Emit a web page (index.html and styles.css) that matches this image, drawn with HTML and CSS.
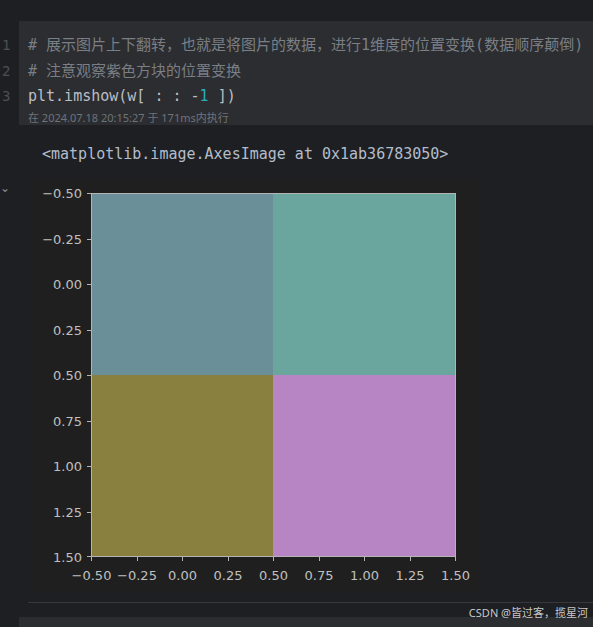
FILE: index.html
```html
<!DOCTYPE html>
<html lang="zh">
<head>
<meta charset="utf-8">
<link rel="stylesheet" href="styles.css">
</head>
<body>
<div class="page">
  <div class="code-row">
    <div class="gutter">
      <div class="ln">1</div>
      <div class="ln">2</div>
      <div class="ln">3</div>
    </div>
    <div class="cell">
      <div class="line cm"># 展示图片上下翻转，也就是将图片的数据，进行1维度的位置变换(数据顺序颠倒)</div>
      <div class="line cm"># 注意观察紫色方块的位置变换</div>
      <div class="line">plt.imshow(w[ : : -<span class="num">1</span> ])</div>
      <div class="meta">在 2024.07.18 20:15:27 于 171ms内执行</div>
    </div>
  </div>
  <div class="output">
    <div class="out-gutter"><span class="chev">⌄</span></div>
    <div class="out-body">
      <div class="repr">&lt;matplotlib.image.AxesImage at 0x1ab36783050&gt;</div>
      <div class="figure">
        <svg width="450" height="414" viewBox="0 0 450 414" shape-rendering="crispEdges">
          <rect x="0" y="0" width="450" height="414" fill="#1f1f1f"/>
          <rect x="61" y="15" width="182" height="182" fill="#6b8f99"/>
          <rect x="243" y="15" width="183" height="182" fill="#6aa59e"/>
          <rect x="61" y="197" width="182" height="182" fill="#898040"/>
          <rect x="243" y="197" width="183" height="182" fill="#b784c4"/>
          <rect x="61.5" y="15.5" width="364" height="363" fill="none" stroke="#b4b4b4" stroke-width="1"/>
          <g stroke="#b4b4b4" stroke-width="1">
            <line x1="57" y1="15.5" x2="61" y2="15.5"/>
            <line x1="57" y1="61.5" x2="61" y2="61.5"/>
            <line x1="57" y1="106.5" x2="61" y2="106.5"/>
            <line x1="57" y1="152.5" x2="61" y2="152.5"/>
            <line x1="57" y1="197.5" x2="61" y2="197.5"/>
            <line x1="57" y1="243.5" x2="61" y2="243.5"/>
            <line x1="57" y1="288.5" x2="61" y2="288.5"/>
            <line x1="57" y1="334.5" x2="61" y2="334.5"/>
            <line x1="57" y1="378.5" x2="61" y2="378.5"/>
            <line x1="61.5" y1="379" x2="61.5" y2="383"/>
            <line x1="107.5" y1="379" x2="107.5" y2="383"/>
            <line x1="152.5" y1="379" x2="152.5" y2="383"/>
            <line x1="198.5" y1="379" x2="198.5" y2="383"/>
            <line x1="243.5" y1="379" x2="243.5" y2="383"/>
            <line x1="289.5" y1="379" x2="289.5" y2="383"/>
            <line x1="334.5" y1="379" x2="334.5" y2="383"/>
            <line x1="380.5" y1="379" x2="380.5" y2="383"/>
            <line x1="425.5" y1="379" x2="425.5" y2="383"/>
          </g>
          <g class="tick" text-anchor="end" shape-rendering="auto">
            <text x="52" y="20">−0.50</text>
            <text x="52" y="65.5">−0.25</text>
            <text x="52" y="111">0.00</text>
            <text x="52" y="156.5">0.25</text>
            <text x="52" y="202">0.50</text>
            <text x="52" y="247.5">0.75</text>
            <text x="52" y="293">1.00</text>
            <text x="52" y="338.5">1.25</text>
            <text x="52" y="384">1.50</text>
          </g>
          <g class="tick" text-anchor="middle" shape-rendering="auto">
            <text x="61.5" y="402">−0.50</text>
            <text x="107" y="402">−0.25</text>
            <text x="152.5" y="402">0.00</text>
            <text x="198" y="402">0.25</text>
            <text x="243.5" y="402">0.50</text>
            <text x="289" y="402">0.75</text>
            <text x="334.5" y="402">1.00</text>
            <text x="380" y="402">1.25</text>
            <text x="425.5" y="402">1.50</text>
          </g>
        </svg>
      </div>
    </div>
  </div>
  <div class="sep"></div>
  <div class="next-cell"></div>
  <div class="watermark">CSDN @皆过客，揽星河</div>
</div>
</body>
</html>
```
FILE: styles.css
```css
html, body {
  margin: 0;
  padding: 0;
  background: #1e1f22;
}
body {
  width: 593px;
  height: 627px;
  overflow: hidden;
}
.page {
  position: relative;
  width: 593px;
  height: 627px;
  padding-top: 21px;
  box-sizing: border-box;
}
.code-row {
  display: grid;
  grid-template-columns: 19px 1fr;
}
.gutter {
  padding-top: 12px;
  font-family: "DejaVu Sans Mono", monospace;
  font-size: 14px;
  color: #4b4f56;
}
.ln {
  height: 25.5px;
  line-height: 25.5px;
  padding-left: 2px;
}
.cell {
  background: #2b2d30;
  padding: 12px 0 0 9px;
  height: 104px;
  box-sizing: border-box;
  font-family: "DejaVu Sans Mono", "Noto Sans CJK SC", monospace;
  font-size: 15px;
  color: #bcbec4;
}
.line {
  height: 25.5px;
  line-height: 25.5px;
  white-space: nowrap;
}
.cm {
  color: #7a7e85;
}
.num {
  color: #2aacb8;
}
.meta {
  font-family: "Noto Sans", "Noto Sans CJK SC", sans-serif;
  font-size: 11px;
  line-height: 14px;
  height: 14px;
  color: #6f737a;
  white-space: nowrap;
  margin-top: 1px;
}
.output {
  display: grid;
  grid-template-columns: 30px 1fr;
}
.out-gutter {
  position: relative;
}
.chev {
  position: absolute;
  left: 0;
  top: 57px;
  font-family: "DejaVu Sans", sans-serif;
  font-size: 12px;
  color: #8a8d93;
  line-height: 12px;
}
.repr {
  margin: 19px 0 0 12px;
  height: 20px;
  line-height: 20px;
  font-family: "DejaVu Sans Mono", monospace;
  font-size: 15px;
  color: #b2bccb;
  white-space: nowrap;
}
.figure {
  margin-top: 14px;
  height: 414px;
}
.figure svg {
  display: block;
}
.tick text {
  font-family: "DejaVu Sans", sans-serif;
  font-size: 13px;
  fill: #c0c0c0;
}
.sep {
  margin: 10px 0 0 28px;
  height: 1px;
  background: #35373c;
}
.next-cell {
  margin: 14px 0 0 19px;
  height: 20px;
  background: #2b2d30;
}
.watermark {
  position: absolute;
  right: 5px;
  bottom: 7px;
  font-family: "Noto Sans", "Noto Sans CJK SC", sans-serif;
  font-size: 11px;
  color: #c8c8c8;
  white-space: nowrap;
}
```
